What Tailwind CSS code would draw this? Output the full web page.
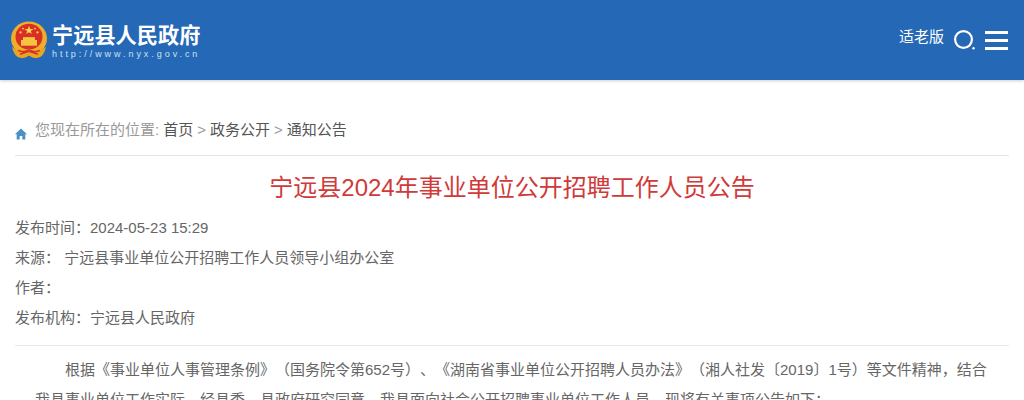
<!DOCTYPE html>
<html lang="zh-CN">
<head>
    <meta charset="UTF-8">
    <title>宁远县人民政府</title>
    <script src="https://cdn.jsdelivr.net/npm/@tailwindcss/browser@4"></script>
</head>
<body class="bg-white h-[400px] overflow-hidden [text-spacing-trim:space-all] font-['Liberation_Sans','Noto_Sans_CJK_SC',sans-serif]">
    <!-- header -->
    <header class="h-[80px] bg-[#2468b6] shadow-[0_1px_3px_rgba(0,0,0,0.2)] flex items-center justify-between pl-[10px] pr-[16px]">
        <div class="flex items-center gap-[4px]">
            <svg width="38" height="38" viewBox="0 0 38 40" preserveAspectRatio="none">
                <circle cx="19" cy="18.5" r="18" fill="#eeae2a"/>
                <circle cx="19" cy="16.5" r="13.5" fill="#d92f26"/>
                <path d="M19 5l1.2 3.4h3.4l-2.8 2 1 3.4-2.8-2-2.8 2 1-3.4-2.8-2h3.4z" fill="#f7d24c"/>
                <circle cx="10.5" cy="12" r="1.2" fill="#f7d24c"/>
                <circle cx="27.5" cy="12" r="1.2" fill="#f7d24c"/>
                <circle cx="13" cy="8" r="1" fill="#f7d24c"/>
                <circle cx="25" cy="8" r="1" fill="#f7d24c"/>
                <rect x="11" y="20" width="16" height="6" fill="#f4c540"/>
                <rect x="13" y="17" width="12" height="3" fill="#f4c540"/>
                <path d="M2 27q8 7 17 2q9 5 17-2q-2 11-9 12q-5 0-8-3q-3 3-8 3q-7-1-9-12z" fill="#e9a423"/>
                <path d="M8 31q6 3 11-1q5 4 11 1M10 35l9-3 9 3" fill="none" stroke="#d92f26" stroke-width="1.5"/>
            </svg>
            <div class="flex flex-col pt-[1px]">
                <div class="text-[21.2px] leading-[26px] font-bold text-white">宁远县人民政府</div>
                <div class="text-[9px] leading-[10px] tracking-[2.95px] text-[#cfe0f2]">http://www.nyx.gov.cn</div>
            </div>
        </div>
        <div class="flex items-center">
            <span class="text-[15px] text-white mr-[10px] -mt-[5px]">适老版</span>
            <svg width="21" height="22" viewBox="0 0 21 22" class="mr-[10px]">
                <circle cx="9.5" cy="10.5" r="8.4" fill="none" stroke="white" stroke-width="2.2"/>
                <circle cx="19.5" cy="19.2" r="1.2" fill="white"/>
            </svg>
            <div class="flex flex-col gap-[5px] w-[23px] mt-[1px]">
                <div class="h-[3px] bg-white"></div>
                <div class="h-[3px] bg-white"></div>
                <div class="h-[3px] bg-white"></div>
            </div>
        </div>
    </header>

    <main class="mx-[15px] w-[994px]">
        <!-- breadcrumb -->
        <div class="h-[76px] pt-[39px] border-b border-[#e4e4e4] flex items-start text-[15px] leading-[22px] text-[#999]">
            <svg width="12" height="12" viewBox="0 0 12 12" class="mt-[9px] mr-[8px]">
                <path d="M6 .5L12 6.2H10.3V11.5H7.3V8H4.7V11.5H1.7V6.2H0z" fill="#4a90c4"/>
            </svg>
            <span>您现在所在的位置:</span>
            <span class="text-[#555] ml-[4px]">首页</span>
            <span class="mx-[4px]">&gt;</span>
            <span class="text-[#555]">政务公开</span>
            <span class="mx-[4px]">&gt;</span>
            <span class="text-[#555]">通知公告</span>
        </div>

        <h1 class="mt-[16px] text-center text-[24px] leading-[32px] font-normal text-[#cf3a3a]">宁远县2024年事业单位公开招聘工作人员公告</h1>

        <!-- meta -->
        <div class="mt-[9px] pb-[12px] border-b border-[#e8e8e8] text-[15px] leading-[30px] text-[#666]">
            <div>发布时间：2024-05-23 15:29</div>
            <div>来源：&nbsp;宁远县事业单位公开招聘工作人员领导小组办公室</div>
            <div>作者：</div>
            <div>发布机构：宁远县人民政府</div>
        </div>

        <!-- body -->
        <div class="mt-[9px] pl-[20px] pr-[20px] text-[15px] leading-[30px] text-[#666] indent-[30px]">
            根据《事业单位人事管理条例》（国务院令第652号）、《湖南省事业单位公开招聘人员办法》（湘人社发〔2019〕1号）等文件精神，结合我县事业单位工作实际，经县委、县政府研究同意，我县面向社会公开招聘事业单位工作人员，现将有关事项公告如下：
        </div>
    </main>
</body>
</html>
